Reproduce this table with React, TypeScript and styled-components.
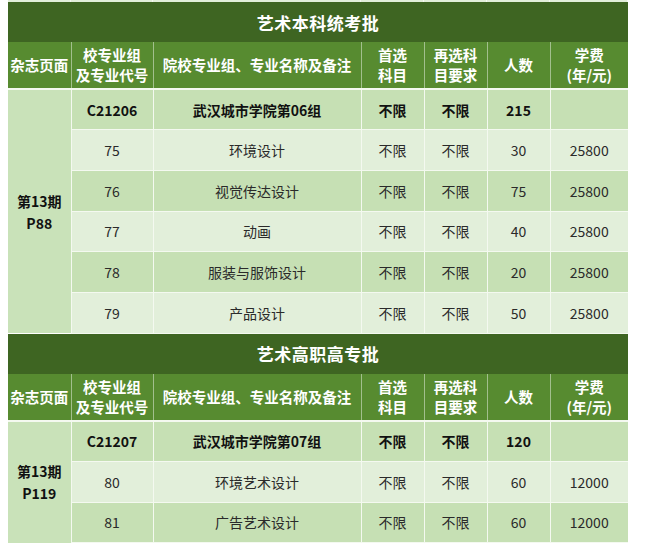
import styled, { createGlobalStyle } from "styled-components";

const GlobalStyle = createGlobalStyle`
    html, body {
        margin: 0;
        padding: 0;
        background: #ffffff;
    }
    body {
        font-family: "Noto Sans CJK SC", "Noto Sans", sans-serif;
    }
`;

type Major = {
    code: string;
    name: string;
    first: string;
    second: string;
    count: string;
    fee: string;
};

type Batch = {
    title: string;
    page: string[];
    group: Major;
    majors: Major[];
};

const batches: Batch[] = [
    {
        title: "艺术本科统考批",
        page: ["第13期", "P88"],
        group: {
            code: "C21206",
            name: "武汉城市学院第06组",
            first: "不限",
            second: "不限",
            count: "215",
            fee: "",
        },
        majors: [
            { code: "75", name: "环境设计", first: "不限", second: "不限", count: "30", fee: "25800" },
            { code: "76", name: "视觉传达设计", first: "不限", second: "不限", count: "75", fee: "25800" },
            { code: "77", name: "动画", first: "不限", second: "不限", count: "40", fee: "25800" },
            { code: "78", name: "服装与服饰设计", first: "不限", second: "不限", count: "20", fee: "25800" },
            { code: "79", name: "产品设计", first: "不限", second: "不限", count: "50", fee: "25800" },
        ],
    },
    {
        title: "艺术高职高专批",
        page: ["第13期", "P119"],
        group: {
            code: "C21207",
            name: "武汉城市学院第07组",
            first: "不限",
            second: "不限",
            count: "120",
            fee: "",
        },
        majors: [
            { code: "80", name: "环境艺术设计", first: "不限", second: "不限", count: "60", fee: "12000" },
            { code: "81", name: "广告艺术设计", first: "不限", second: "不限", count: "60", fee: "12000" },
        ],
    },
];

const widths = [63, 82, 208, 63, 63, 63, 78];

export default function App() {
    return (
        <>
            <GlobalStyle />
            <Page>
                <TopStrip>
                    {widths.map((w, i) => (
                        <StripCell key={i} style={{ width: w }} />
                    ))}
                </TopStrip>
                {batches.map((batch) => (
                    <Table key={batch.title}>
                        <colgroup>
                            {widths.map((w, i) => (
                                <col key={i} style={{ width: w }} />
                            ))}
                        </colgroup>
                        <thead>
                            <tr>
                                <TitleCell colSpan={7}>{batch.title}</TitleCell>
                            </tr>
                            <tr>
                                <HeadCell>杂志页面</HeadCell>
                                <HeadCell>
                                    校专业组
                                    <br />
                                    及专业代号
                                </HeadCell>
                                <HeadCell>院校专业组、专业名称及备注</HeadCell>
                                <HeadCell>
                                    首选
                                    <br />
                                    科目
                                </HeadCell>
                                <HeadCell>
                                    再选科
                                    <br />
                                    目要求
                                </HeadCell>
                                <HeadCell>人数</HeadCell>
                                <HeadCell>
                                    学费
                                    <br />
                                    (年/元)
                                </HeadCell>
                            </tr>
                        </thead>
                        <tbody>
                            <Row>
                                <PageCell rowSpan={batch.majors.length + 1}>
                                    {batch.page[0]}
                                    <br />
                                    {batch.page[1]}
                                </PageCell>
                                <Cell $bold $shade>{batch.group.code}</Cell>
                                <Cell $bold $shade>{batch.group.name}</Cell>
                                <Cell $bold $shade>{batch.group.first}</Cell>
                                <Cell $bold $shade>{batch.group.second}</Cell>
                                <Cell $bold $shade>{batch.group.count}</Cell>
                                <Cell $bold $shade>{batch.group.fee}</Cell>
                            </Row>
                            {batch.majors.map((m, i) => (
                                <Row key={m.code}>
                                    <Cell $shade={i % 2 === 1}>{m.code}</Cell>
                                    <Cell $shade={i % 2 === 1}>{m.name}</Cell>
                                    <Cell $shade={i % 2 === 1}>{m.first}</Cell>
                                    <Cell $shade={i % 2 === 1}>{m.second}</Cell>
                                    <Cell $shade={i % 2 === 1}>{m.count}</Cell>
                                    <Cell $shade={i % 2 === 1}>{m.fee}</Cell>
                                </Row>
                            ))}
                        </tbody>
                    </Table>
                ))}
            </Page>
        </>
    );
}

const Page = styled.div`
    padding-left: 8px;
    width: 620px;
`;

const TopStrip = styled.div`
    display: flex;
    height: 2px;
`;

const StripCell = styled.div`
    background: #e2efda;
    border-right: 1px solid #f6faf3;
    box-sizing: border-box;
`;

const Table = styled.table`
    width: 620px;
    table-layout: fixed;
    border-collapse: collapse;
    border-spacing: 0;
`;

const TitleCell = styled.th`
    height: 40px;
    padding: 0;
    background: #3e6522;
    color: #ffffff;
    font-size: 17px;
    font-weight: 700;
    text-align: center;
    letter-spacing: 0.5px;
`;

const HeadCell = styled.th`
    height: 46px;
    padding: 0;
    background: #578b30;
    color: #ffffff;
    font-size: 14.5px;
    font-weight: 700;
    line-height: 20px;
    text-align: center;
    border-left: 1px solid rgba(255, 255, 255, 0.45);
    border-bottom: 2px solid #f4f9f0;

    &:first-child {
        border-left: none;
    }
`;

const Row = styled.tr`
    height: 40.7px;
`;

const Cell = styled.td<{ $bold?: boolean; $shade?: boolean }>`
    padding: 0;
    text-align: center;
    font-size: 14px;
    color: ${(p) => (p.$bold ? "#111111" : "#2a2a2a")};
    font-weight: ${(p) => (p.$bold ? 700 : 400)};
    background: ${(p) => (p.$shade ? "#c6e0b4" : "#e2efda")};
    border: 1px solid #f4f9f0;
    border-top: none;

    &:last-child {
        border-right: none;
    }
`;

const PageCell = styled.td`
    padding: 0;
    text-align: center;
    font-size: 14px;
    font-weight: 700;
    line-height: 22px;
    color: #111111;
    background: #c9e2b9;
    border-right: 1px solid #f4f9f0;
`;
